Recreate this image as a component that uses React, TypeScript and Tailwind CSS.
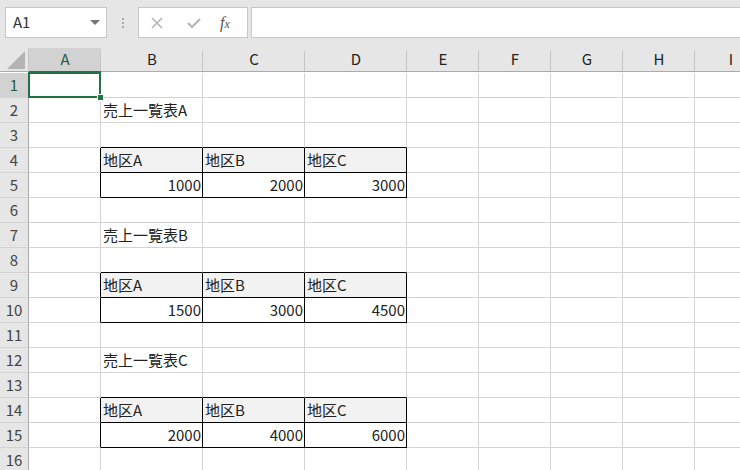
import React from 'react';

const cols = ['A', 'B', 'C', 'D', 'E', 'F', 'G', 'H', 'I'];
const widths = [72, 102, 102, 102, 72, 72, 72, 72, 72];

type Cell = { text: string; align?: 'left' | 'right'; head?: boolean; box?: boolean };

const tables = [
  { title: '売上一覧表A', row: 2, values: ['1000', '2000', '3000'] },
  { title: '売上一覧表B', row: 7, values: ['1500', '3000', '4500'] },
  { title: '売上一覧表C', row: 12, values: ['2000', '4000', '6000'] },
];

function cellAt(r: number, c: number): Cell | null {
  for (const t of tables) {
    if (r === t.row && c === 1) return { text: t.title };
    if (r === t.row + 2 && c >= 1 && c <= 3) return { text: '地区' + ['A', 'B', 'C'][c - 1], head: true, box: true };
    if (r === t.row + 3 && c >= 1 && c <= 3) return { text: t.values[c - 1], align: 'right', box: true };
  }
  return null;
}

function isBox(r: number, c: number) {
  const x = cellAt(r, c);
  return !!(x && x.box);
}

const font = { fontFamily: '"Noto Sans CJK JP", "Liberation Sans", sans-serif' };

export default function App() {
  const rows = Array.from({ length: 16 }, (_, i) => i + 1);
  return (
    <div className="w-[740px] h-[470px] overflow-hidden bg-white text-[#222]" style={font}>
      {/* formula bar */}
      <div className="h-[48px] bg-[#e6e6e6] flex items-start pt-[7px] pl-[5px]">
        <div className="w-[102px] h-[31px] bg-white border border-[#c6c6c6] flex items-center justify-between pl-[7px] pr-[6px]">
          <span className="text-[15px] text-[#333]">A1</span>
          <span className="w-0 h-0 border-l-[5px] border-r-[5px] border-t-[5px] border-l-transparent border-r-transparent border-t-[#777]" />
        </div>
        <div className="w-[31px] h-[31px] flex flex-col items-center justify-center gap-[2px]">
          <span className="w-[2px] h-[2px] bg-[#aaa]" />
          <span className="w-[2px] h-[2px] bg-[#aaa]" />
          <span className="w-[2px] h-[2px] bg-[#aaa]" />
        </div>
        <div className="w-[110px] h-[31px] bg-white border border-[#c6c6c6] flex items-center">
          <svg width="14" height="14" viewBox="0 0 14 14" className="ml-[11px]">
            <path d="M2 2 L12 12 M12 2 L2 12" stroke="#b5b5b5" strokeWidth="1.6" />
          </svg>
          <svg width="16" height="14" viewBox="0 0 16 14" className="ml-[22px]">
            <path d="M2 7 L6 11 L14 3" stroke="#b5b5b5" strokeWidth="2.2" fill="none" />
          </svg>
          <span
            className="ml-[18px] text-[16px] italic text-[#555] leading-none"
            style={{ fontFamily: '"Liberation Serif", serif' }}
          >
            f<span className="text-[12px]">x</span>
          </span>
        </div>
        <div className="ml-[3px] flex-1 h-[31px] bg-white border border-[#c6c6c6] border-r-0" />
      </div>

      {/* grid */}
      <div
        className="grid"
        style={{ gridTemplateColumns: `29px ${widths.map((w) => w + 'px').join(' ')}`, gridAutoRows: '25px' }}
      >
        {/* header row */}
        <div className="h-[24px] bg-[#e6e6e6] border-b border-[#ababab] border-r border-r-[#c6c6c6] flex items-end justify-end pr-[3px] pb-[2px]">
          <svg width="18" height="18" viewBox="0 0 18 18">
            <path d="M18 0 L18 18 L0 18 Z" fill="#b4b4b4" />
          </svg>
        </div>
        {cols.map((c, i) => (
          <div
            key={c}
            className={`h-[24px] flex items-center justify-center text-[15px] border-b relative ${
              i === 0 ? 'bg-[#d2d2d2] border-[#217346] text-[#1d5c40]' : 'bg-[#e6e6e6] border-[#ababab] text-[#222]'
            }`}
          >
            {c}
            <span className="absolute right-0 top-[3px] bottom-0 w-px bg-[#c6c6c6]" />
          </div>
        ))}

        {rows.map((r) => (
          <React.Fragment key={r}>
            <div
              className={`flex items-center justify-center text-[15px] border-b border-[#d4d4d4] border-r ${
                r === 1 ? 'bg-[#d2d2d2] border-r-[#217346] text-[#1d5c40]' : 'bg-[#e6e6e6] border-r-[#ababab] text-[#444]'
              }`}
            >
              {r}
            </div>
            {cols.map((c, ci) => {
              const cell = cellAt(r, ci);
              const boxed = isBox(r, ci);
              const rightBlack = boxed || isBox(r, ci + 1);
              const bottomBlack = boxed || isBox(r + 1, ci);
              const selected = r === 1 && ci === 0;
              return (
                <div
                  key={c}
                  className={`relative flex items-center text-[15px] border-r border-b ${selected ? 'z-10' : ''} ${
                    rightBlack ? 'border-r-black' : 'border-r-[#d4d4d4]'
                  } ${bottomBlack ? 'border-b-black' : 'border-b-[#d4d4d4]'} ${
                    cell?.head ? 'bg-[#f2f2f2]' : ''
                  } ${cell?.align === 'right' ? 'justify-end pr-[1px]' : 'pl-[2px]'}`}
                >
                  {cell && <span className="whitespace-nowrap">{cell.text}</span>}
                  {selected && (
                    <>
                      <span className="absolute -left-[1px] -top-[1px] -right-[1px] -bottom-[1px] border-2 border-[#217346]" />
                      <span className="absolute -right-[4px] -bottom-[4px] w-[7px] h-[7px] bg-[#217346] border border-white" />
                    </>
                  )}
                </div>
              );
            })}
          </React.Fragment>
        ))}
      </div>
    </div>
  );
}
